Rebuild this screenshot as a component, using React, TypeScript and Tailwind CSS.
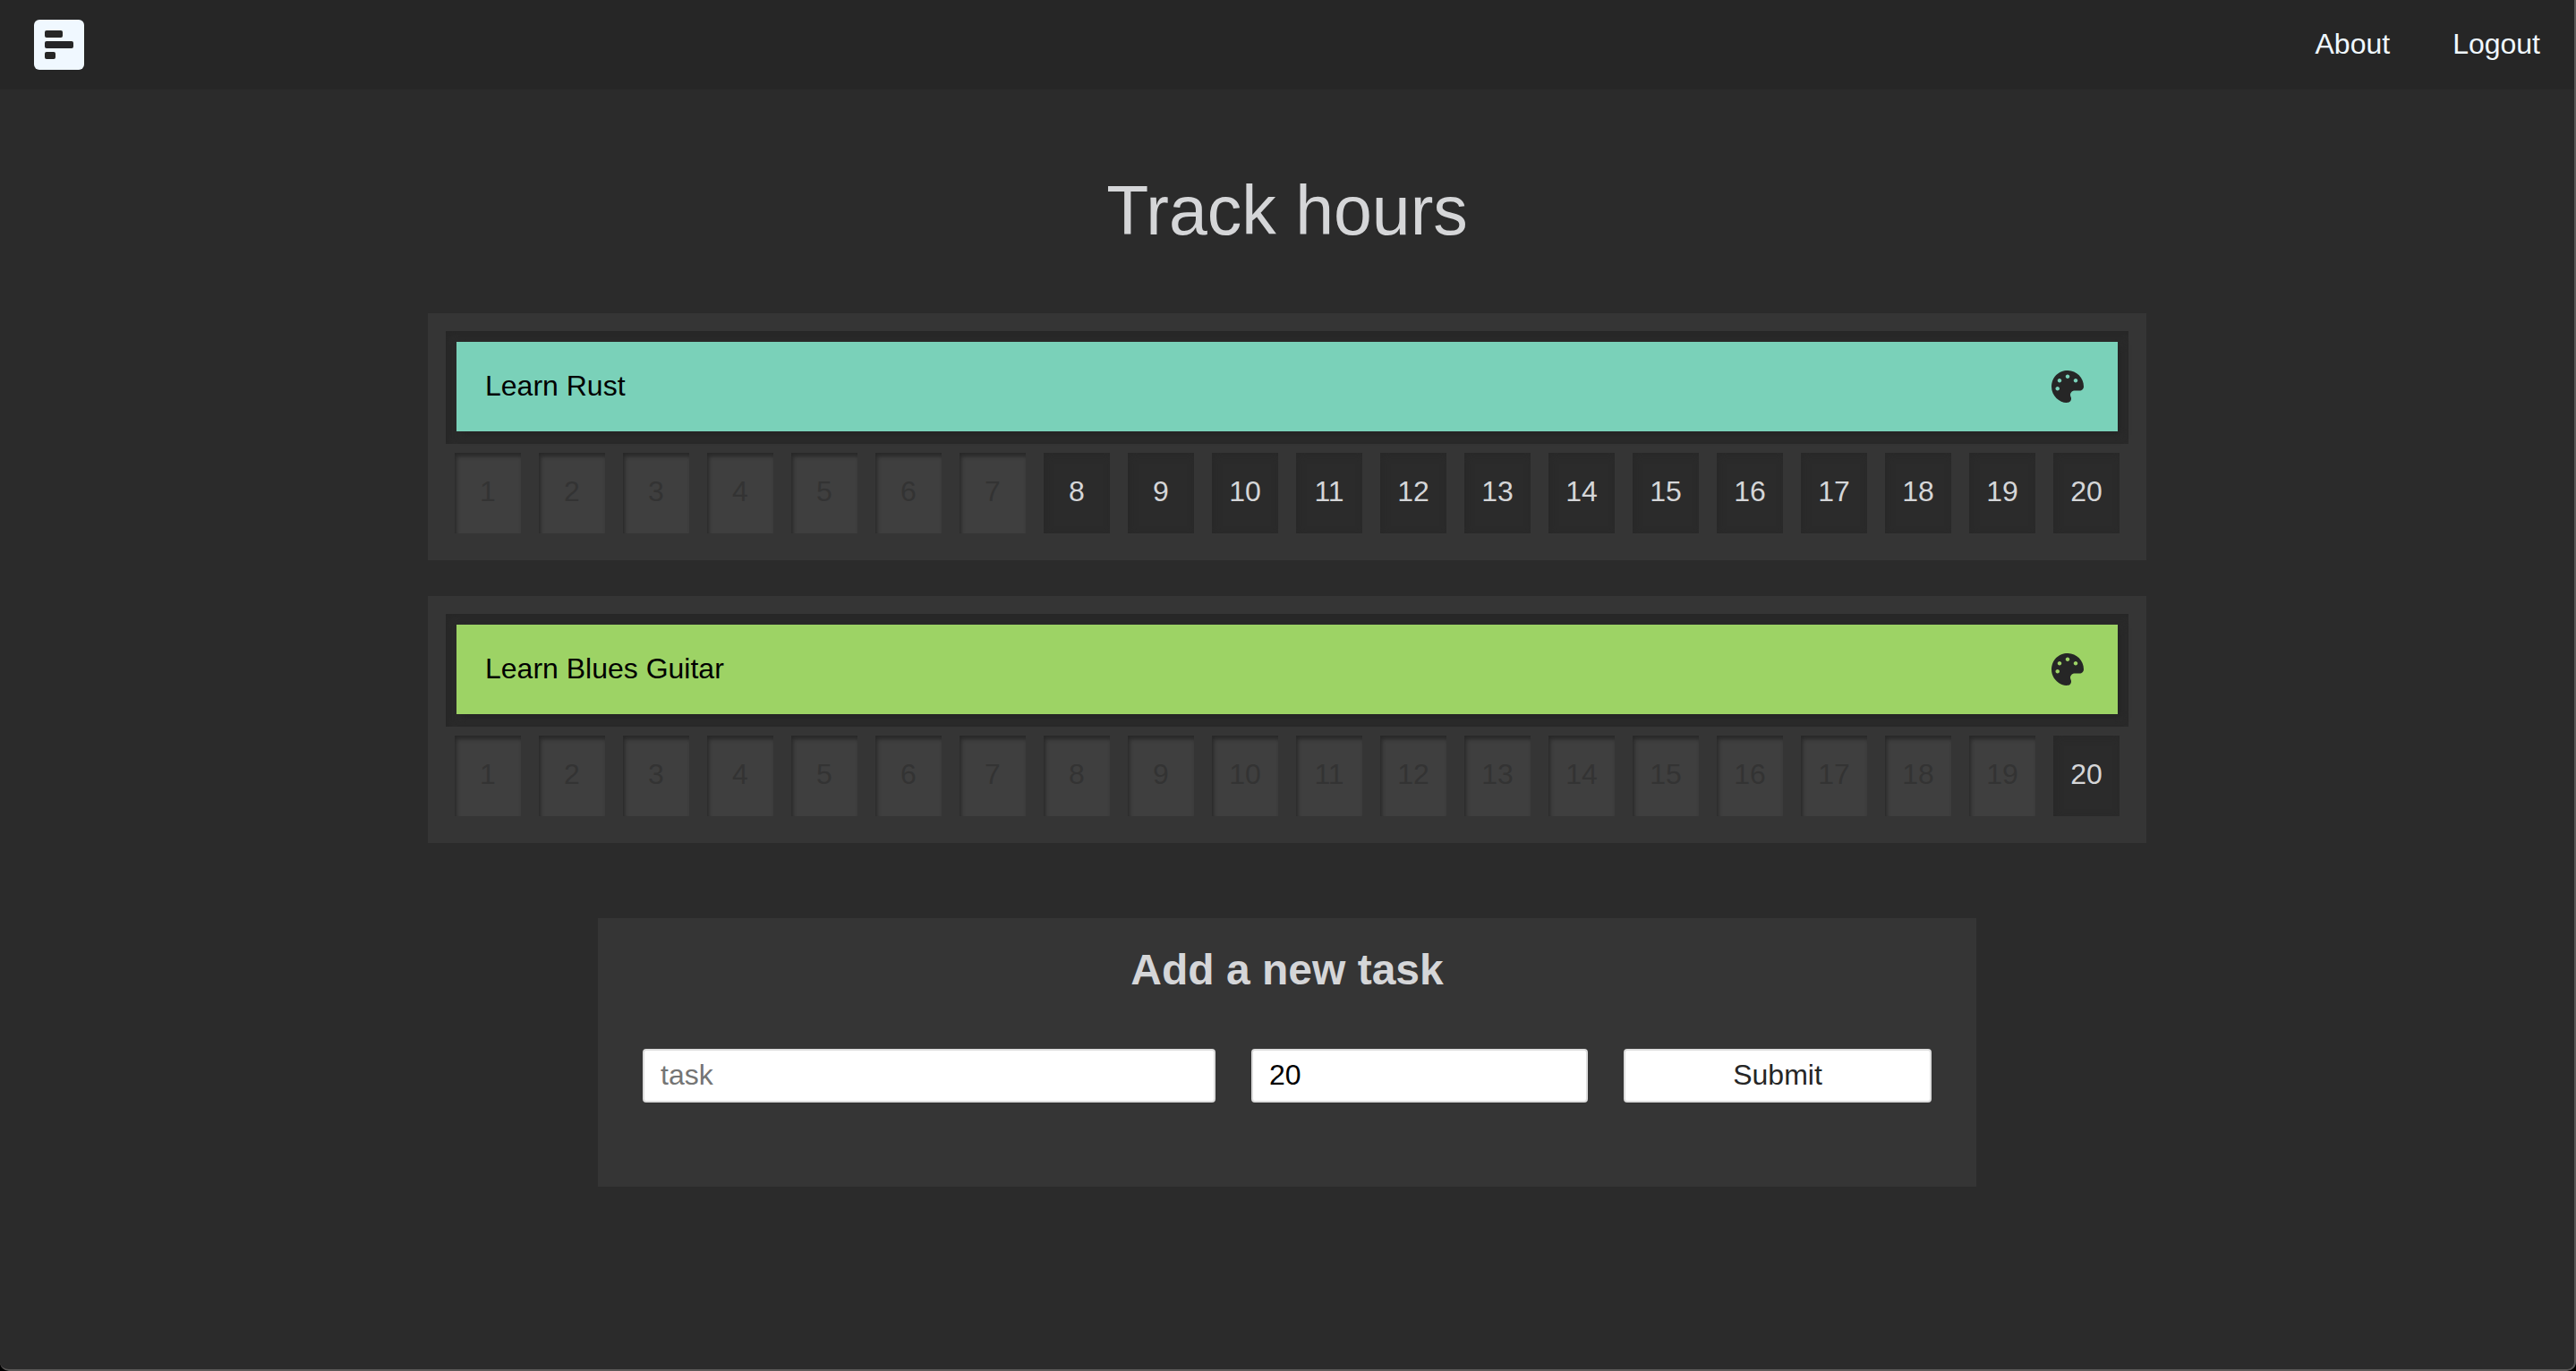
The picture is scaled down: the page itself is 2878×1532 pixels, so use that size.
import { FaPalette } from "react-icons/fa";

type Task = { name: string; color: string; total: number; used: number };

const tasks: Task[] = [
  { name: "Learn Rust", color: "bg-[#7ad1b9]", total: 20, used: 7 },
  { name: "Learn Blues Guitar", color: "bg-[#9dd365]", total: 20, used: 19 },
];

function Logo() {
  return (
    <svg viewBox="0 0 56 56" className="size-14" aria-hidden="true">
      <rect width="56" height="56" rx="6" fill="#f0f8ff" />
      <rect x="12" y="12" width="20" height="8" rx="2" fill="#262626" />
      <rect x="12" y="24" width="32" height="8" rx="2" fill="#262626" />
      <rect x="12" y="36" width="12" height="8" rx="2" fill="#262626" />
    </svg>
  );
}

function HourCell({ hour, used }: { hour: number; used: boolean }) {
  return (
    <button
      type="button"
      disabled={used}
      className={
        used
          ? "h-[90px] min-w-0 flex-1 bg-[#3f3f3f] pb-1 text-[#333333] shadow-[inset_2px_4px_4px_#282828]"
          : "h-[90px] min-w-0 flex-1 bg-[#2b2b2b] pb-1 text-[#d5d6d8] shadow-[inset_2px_2px_8px_#282828]"
      }
    >
      {hour}
    </button>
  );
}

function TaskCard({ task }: { task: Task }) {
  return (
    <section className="bg-[#353535] px-5 pt-5 pb-[30px]">
      <div className="bg-[#2b2b2b] px-3 pt-3 pb-[14px] shadow-[inset_4px_4px_8px_#262626]">
        <div
          className={`flex h-[100px] items-center justify-between pr-[38px] pl-8 text-black shadow-[4px_4px_8px_#242424] ${task.color}`}
        >
          <h2 className="pb-0.5">{task.name}</h2>
          <button type="button" aria-label={`Change color of ${task.name}`}>
            <FaPalette className="size-9 text-[#262626]" />
          </button>
        </div>
      </div>
      <div className="flex gap-5 px-[10px] pt-[10px]">
        {Array.from({ length: task.total }, (_, i) => (
          <HourCell key={i} hour={i + 1} used={i < task.used} />
        ))}
      </div>
    </section>
  );
}

const field =
  "h-[60px] w-full min-w-0 rounded-[4px] border-2 border-[#dddddd] bg-white pb-0.5";

export default function App() {
  return (
    <div className="flex min-h-screen flex-col bg-black">
      <div className="flex grow flex-col overflow-hidden rounded-b-[10px] border-r-2 border-b-2 border-[#5b5958] bg-[#2b2b2b] font-['Liberation_Sans',Arial,sans-serif] text-[32px] leading-9">
        <header className="flex h-[100px] items-center justify-between bg-[#262626] px-[38px]">
          <a href="#home" aria-label="Home">
            <Logo />
          </a>
          <nav className="flex gap-[70px] pb-0.5 text-[#f0f8ff]">
            <a href="#about">About</a>
            <a href="#logout">Logout</a>
          </nav>
        </header>
        <main className="mx-auto flex w-full max-w-[1920px] flex-col items-center">
          <h1 className="pt-[90px] pb-[70px] text-[77px] leading-[90px] text-[#d5d6d8]">
            Track hours
          </h1>
          <div className="flex w-full flex-col gap-10">
            {tasks.map((task) => (
              <TaskCard key={task.name} task={task} />
            ))}
          </div>
          <form
            className="mt-[84px] w-full max-w-[1540px] bg-[#353535] px-[50px] pt-[30px] pb-[94px]"
            onSubmit={(e) => e.preventDefault()}
          >
            <h2 className="pb-[60px] text-center text-5xl leading-[56px] font-bold text-[#d5d6d8]">
              Add a new task
            </h2>
            <div className="grid grid-cols-[640fr_376fr_344fr] gap-10">
              <input
                aria-label="Task"
                placeholder="task"
                className={`${field} px-[18px] text-black placeholder:text-[#757575]`}
              />
              <input
                aria-label="Hours"
                defaultValue="20"
                inputMode="numeric"
                className={`${field} px-[18px] text-black`}
              />
              <button type="submit" className={`${field} text-[#262626]`}>
                Submit
              </button>
            </div>
          </form>
        </main>
      </div>
    </div>
  );
}
